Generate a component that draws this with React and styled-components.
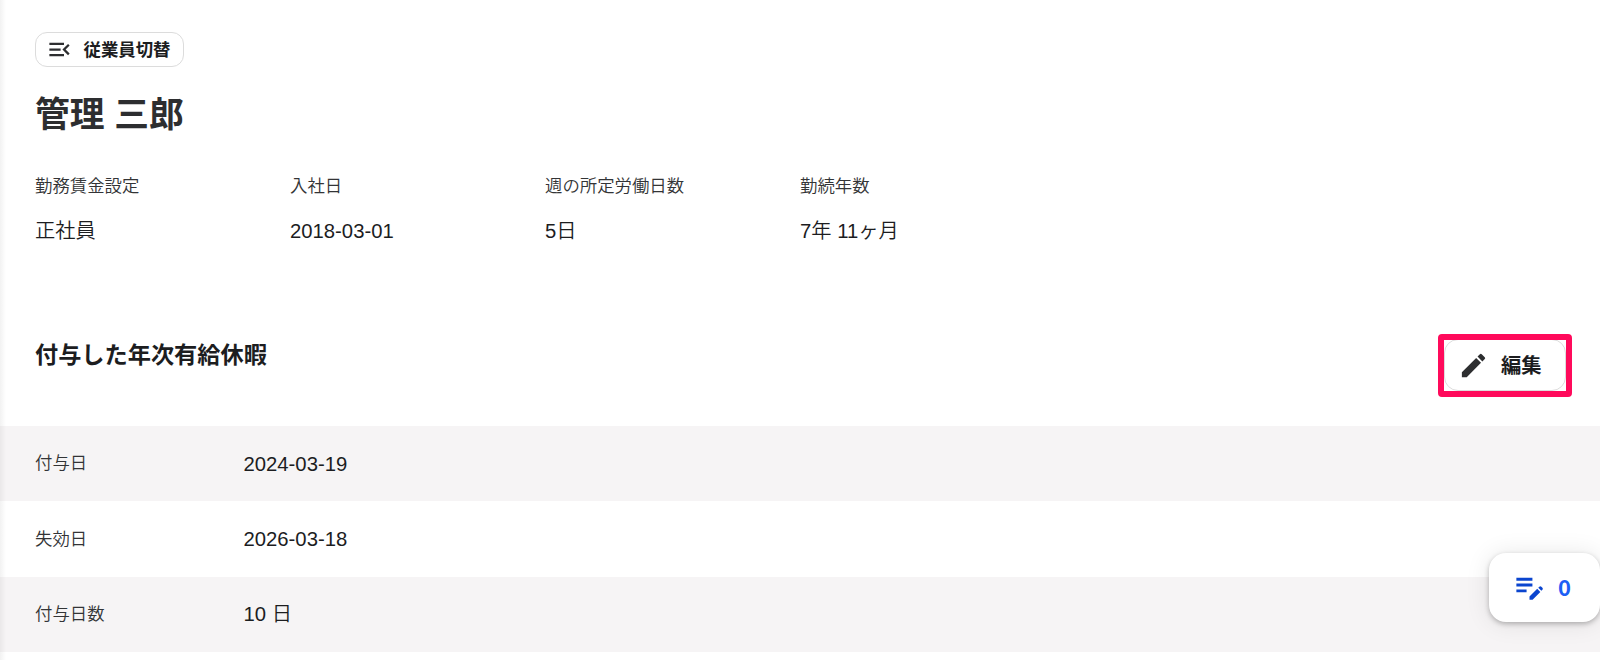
import React from "react";
import styled, { createGlobalStyle } from "styled-components";
import { MdMenuOpen, MdEdit, MdEditNote } from "react-icons/md";

const profile = [
  { label: "勤務賃金設定", value: "正社員" },
  { label: "入社日", value: "2018-03-01" },
  { label: "週の所定労働日数", value: "5日" },
  { label: "勤続年数", value: "7年 11ヶ月" },
];

const grants = [
  { label: "付与日", value: "2024-03-19" },
  { label: "失効日", value: "2026-03-18" },
  { label: "付与日数", value: "10 日" },
];

const App = () => {
  return (
    <>
      <GlobalStyle />
      <StPage>
        <StHeader>
          <StSwitchButton>
            <MdMenuOpen size={27} />
            <span>従業員切替</span>
          </StSwitchButton>
          <StName>管理 三郎</StName>
          <StProfile>
            {profile.map((item) => (
              <div key={item.label}>
                <StLabel>{item.label}</StLabel>
                <StValue>{item.value}</StValue>
              </div>
            ))}
          </StProfile>
        </StHeader>
        <StSection>
          <StTitle>付与した年次有給休暇</StTitle>
          <StEditWrap>
            <StEditButton>
              <MdEdit size={31} />
              <span>編集</span>
            </StEditButton>
            <StHighlight />
          </StEditWrap>
        </StSection>
        <div>
          {grants.map((item, i) => (
            <StRow key={item.label} $gray={i % 2 === 0}>
              <StLabel>{item.label}</StLabel>
              <StValue>{item.value}</StValue>
            </StRow>
          ))}
        </div>
        <StEdgeShadow />
        <StFloating>
          <MdEditNote size={35} />
          <b>0</b>
        </StFloating>
      </StPage>
    </>
  );
};

export default App;

const GlobalStyle = createGlobalStyle`
  * {
    box-sizing: border-box;
  }
  body {
    margin: 0;
    overflow: hidden;
    background: #fff;
    color: #1c1d1f;
    font-family: "Liberation Sans", "Noto Sans CJK JP", sans-serif;
    font-weight: 350;
  }
  button {
    font-family: inherit;
    color: inherit;
    background: #fff;
    padding: 0;
  }
  svg {
    flex: none;
  }
`;

const StPage = styled.div`
  position: relative;
  height: 660px;
  overflow: hidden;
`;

const StHeader = styled.div`
  padding: 32px 35px 0;
  height: 334px;
`;

const StSwitchButton = styled.button`
  display: flex;
  align-items: center;
  gap: 10.5px;
  width: 149px;
  height: 35px;
  padding-left: 10px;
  border: 1px solid #dcdcdc;
  border-radius: 12px;
  font-size: 17.4px;
  font-weight: 700;
  white-space: nowrap;

  svg {
    color: #2d2e30;
  }
  span {
    padding-bottom: 3px;
  }
`;

const StName = styled.h1`
  margin: 23px 0 0;
  font-size: 34.8px;
  line-height: 50px;
  font-weight: 700;
  color: #2d2e30;
`;

const StProfile = styled.div`
  display: grid;
  grid-template-columns: repeat(4, 255px);
  margin-top: 33px;

  > div {
    display: flex;
    flex-direction: column;
    gap: 17px;
  }
`;

const StLabel = styled.div`
  font-size: 17.4px;
  line-height: 26px;
  color: #333436;
`;

const StValue = styled.div`
  font-size: 20.3px;
  line-height: 30px;
`;

const StSection = styled.div`
  display: flex;
  justify-content: space-between;
  height: 92px;
  padding: 5px 34px 0 35px;
`;

const StTitle = styled.h2`
  margin: 0;
  font-size: 23.2px;
  line-height: 32px;
  font-weight: 700;
`;

const StEditWrap = styled.div`
  position: relative;
  height: 52px;
`;

const StEditButton = styled.button`
  display: flex;
  align-items: center;
  gap: 12.5px;
  width: 122px;
  height: 52px;
  padding-left: 12.5px;
  border: 1px solid #dcdcdc;
  border-radius: 14px;
  font-size: 20.3px;
  font-weight: 700;

  svg {
    color: #2d2e30;
  }
  span {
    padding-bottom: 2px;
  }
`;

const StHighlight = styled.div`
  position: absolute;
  top: -5px;
  left: -6px;
  width: 134px;
  height: 63px;
  border: 6px solid #ff0a5b;
  border-radius: 4px;
`;

const StRow = styled.div`
  display: grid;
  grid-template-columns: 208.5px 1fr;
  align-items: center;
  height: 75.4px;
  padding: 0 35px;
  background: ${({ $gray }) => ($gray ? "#f6f4f5" : "#fff")};

  ${StLabel} {
    padding-bottom: 1px;
  }
`;

const StEdgeShadow = styled.div`
  position: absolute;
  top: 0;
  left: 0;
  width: 6px;
  height: 100%;
  background: linear-gradient(to right, rgba(0, 0, 0, 0.05), transparent);
`;

const StFloating = styled.div`
  position: absolute;
  top: 553px;
  right: 0;
  display: flex;
  align-items: center;
  gap: 11px;
  width: 111px;
  height: 69px;
  padding: 0 0 3px 23px;
  border-radius: 17px;
  background: #fff;
  color: #0b45cf;
  box-shadow: 0 2px 5px rgba(0, 0, 0, 0.25), 0 1px 24px rgba(0, 0, 0, 0.1);

  b {
    font-family: "Noto Sans CJK JP", sans-serif;
    font-size: 22px;
    font-weight: 700;
    line-height: 30px;
    padding-bottom: 1px;
    color: #1d5ff5;
  }
`;
